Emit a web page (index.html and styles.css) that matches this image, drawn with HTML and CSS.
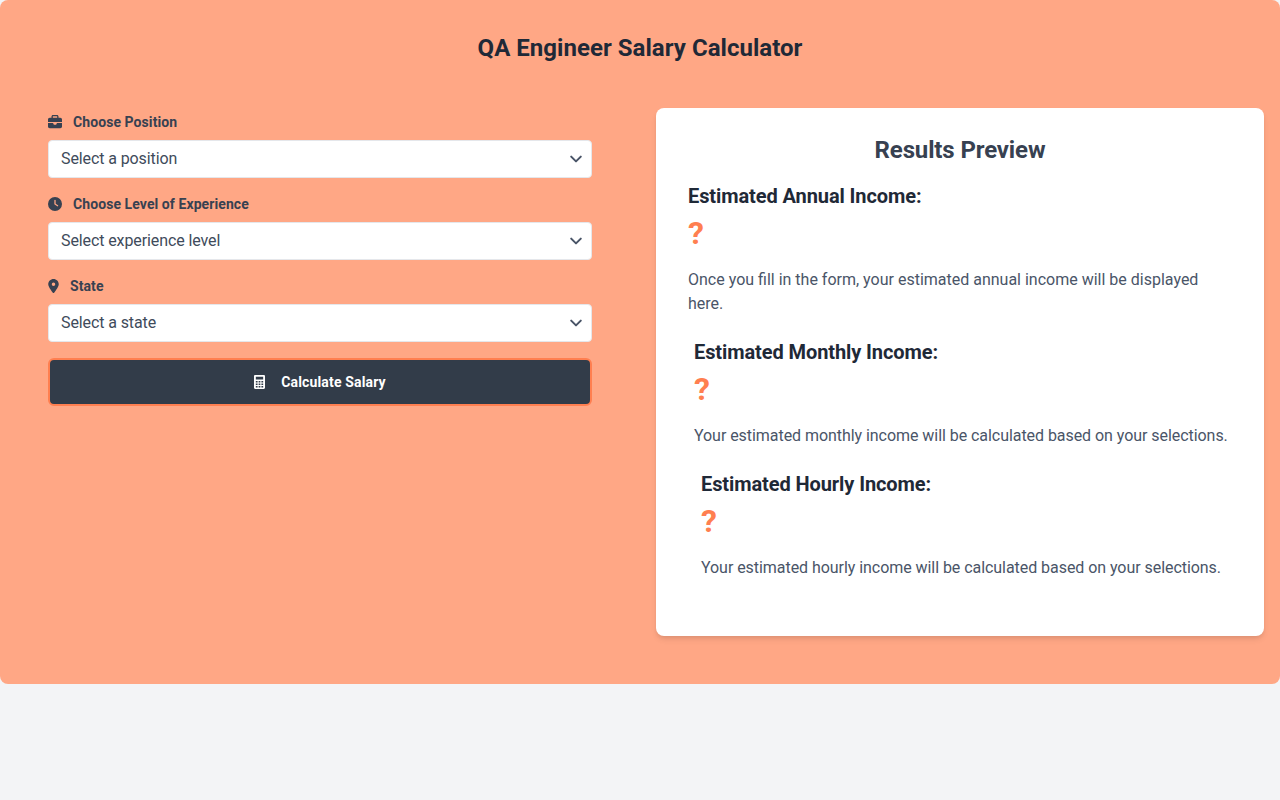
FILE: index.html
```html
<!DOCTYPE html>
<html lang="en">
<head>
    <meta charset="UTF-8">
    <meta name="viewport" content="width=device-width, initial-scale=1.0">
    <title>QA Engineer Salary Calculator</title>
    <link rel="stylesheet" href="styles.css">
</head>
<body>

<div class="calculator">
    <h1>QA Engineer Salary Calculator</h1>

    <div class="columns">
        <form class="salary-form">
            <!-- Position -->
            <div class="form-group">
                <label for="position">
                    <svg class="label-icon" width="14" height="14" viewBox="0 0 512 512" fill="currentColor"><path d="M184 48H328c4.400 0 8 3.600 8 8V96H176V56c0-4.400 3.600-8 8-8zm-56 8V96H64C28.700 96 0 124.700 0 160v96H192 320 512V160c0-35.300-28.700-64-64-64H384V56c0-30.900-25.100-56-56-56H184c-30.900 0-56 25.100-56 56zM512 288H320v32c0 17.700-14.300 32-32 32H224c-17.700 0-32-14.300-32-32V288H0V416c0 35.300 28.700 64 64 64H448c35.300 0 64-28.700 64-64V288z"/></svg>
                    Choose Position
                </label>
                <select id="position">
                    <option value="">Select a position</option>
                </select>
            </div>

            <!-- Experience -->
            <div class="form-group">
                <label for="experience">
                    <svg class="label-icon" width="14" height="14" viewBox="0 0 512 512" fill="currentColor"><path d="M256 0a256 256 0 1 1 0 512A256 256 0 1 1 256 0zM232 120V256c0 8 4 15.500 10.700 20l96 64c11 7.400 25.900 4.400 33.300-6.700s4.400-25.900-6.700-33.300L280 243.200V120c0-13.300-10.700-24-24-24s-24 10.700-24 24z"/></svg>
                    Choose Level of Experience
                </label>
                <select id="experience">
                    <option value="">Select experience level</option>
                </select>
            </div>

            <!-- State -->
            <div class="form-group">
                <label for="state">
                    <svg class="label-icon" width="11" height="14" viewBox="0 0 384 512" fill="currentColor"><path d="M215.700 499.200C267 435 384 279.400 384 192C384 86 298 0 192 0S0 86 0 192c0 87.400 117 243 168.300 307.200c12.300 15.300 35.100 15.300 47.400 0zM192 128a64 64 0 1 1 0 128 64 64 0 1 1 0-128z"/></svg>
                    State
                </label>
                <select id="state">
                    <option value="">Select a state</option>
                </select>
            </div>

            <button type="button" class="calculate-button">
                <svg class="button-icon" width="11" height="14" viewBox="0 0 12 14" preserveAspectRatio="none" fill="currentColor" fill-rule="evenodd"><path d="M1.200 0h9.600c.6 0 1.200.6 1.200 1.200v11.600c0 .6-.6 1.200-1.200 1.200H1.200c-.6 0-1.200-.6-1.200-1.200V1.200C0 .6.600 0 1.200 0zM2 1.800v2.700h8V1.800zM2 6v1.500h1.900V6zM5.050 6v1.500h1.900V6zM8.100 6v1.500H10V6zM2 8.500V10h1.900V8.500zM5.050 8.500V10h1.900V8.500zM8.100 8.500V10H10V8.500zM2 11v1.500h1.900V11zM5.050 11v1.500h1.900V11zM8.100 11v1.500H10V11z"/></svg>
                Calculate Salary
            </button>
        </form>

        <div class="results">
            <h2>Results Preview</h2>

            <div class="result-block">
                <h3>Estimated Annual Income:</h3>
                <div class="unknown">?</div>
                <p>Once you fill in the form, your estimated annual income will be displayed here.</p>
            </div>

            <div class="result-block monthly">
                <h3>Estimated Monthly Income:</h3>
                <div class="unknown">?</div>
                <p>Your estimated monthly income will be calculated based on your selections.</p>
            </div>

            <div class="result-block hourly">
                <h3>Estimated Hourly Income:</h3>
                <div class="unknown">?</div>
                <p>Your estimated hourly income will be calculated based on your selections.</p>
            </div>
        </div>
    </div>
</div>

</body>
</html>
```

FILE: styles.css
```css
* {
    box-sizing: border-box;
}
body {
    font-family: Roboto, Arial, sans-serif;
    margin: 0;
    min-height: 800px;
    background-color: #f3f4f6;
}
.calculator {
    height: 684px;
    padding: 32px 16px 48px;
    border-radius: 8px;
    background-color: #ffa785;
}
h1 {
    margin: 0 0 44px;
    font-size: 24px;
    line-height: 32px;
    font-weight: 700;
    letter-spacing: 0.035px;
    color: #1f2937;
    text-align: center;
}
.columns {
    display: grid;
    grid-template-columns: 1fr 1fr;
    gap: 32px;
}
.salary-form {
    padding: 4px 32px 0;
}
.form-group {
    margin-bottom: 16px;
}
label {
    display: flex;
    align-items: center;
    margin-bottom: 8px;
    font-size: 14px;
    line-height: 20px;
    font-weight: 700;
    letter-spacing: 0.08px;
    color: #374151;
}
.label-icon {
    margin-right: 11px;
}
select {
    display: block;
    width: 100%;
    height: 38px;
    padding: 0 40px 2px 12px;
    border: 1px solid #e5e7eb;
    border-radius: 4px;
    background-color: white;
    background-image: url("data:image/svg+xml,%3csvg xmlns='http://www.w3.org/2000/svg' viewBox='0 0 20 20' fill='none'%3e%3cpath d='M6 8l4 4 4-4' stroke='%234a5568' stroke-width='1.700' stroke-linecap='round' stroke-linejoin='round'/%3e%3c/svg%3e");
    background-repeat: no-repeat;
    background-position: right 3px center;
    background-size: 24px 24px;
    appearance: none;
    font-family: inherit;
    font-size: 16px;
    letter-spacing: -0.1px;
    color: #404b5b;
}
.calculate-button {
    display: flex;
    align-items: center;
    justify-content: center;
    width: 100%;
    height: 48px;
    border: 2px solid #ff7f50;
    border-radius: 6px;
    background-color: #323c49;
    font-family: inherit;
    font-size: 14px;
    font-weight: 700;
    letter-spacing: 0.15px;
    color: white;
}
.button-icon {
    margin-right: 16px;
}
.results {
    height: 528px;
    padding: 26px 32px 0;
    border-radius: 8px;
    background-color: white;
    box-shadow: 0 4px 6px -1px rgba(0, 0, 0, 0.1), 0 2px 4px -1px rgba(0, 0, 0, 0.06);
}
h2 {
    margin: 0 0 16px;
    font-size: 24px;
    line-height: 32px;
    font-weight: 700;
    letter-spacing: -0.13px;
    color: #374151;
    text-align: center;
}
h3 {
    margin: 0 0 7px;
    font-size: 20px;
    line-height: 28px;
    font-weight: 700;
    letter-spacing: -0.09px;
    color: #1f2937;
}
.unknown {
    margin-bottom: 19px;
    font-size: 32px;
    line-height: 32px;
    font-weight: 700;
    color: #ff7f50;
}
p {
    margin: 0;
    font-size: 16px;
    line-height: 24px;
    color: #4a5568;
}
.result-block {
    margin-bottom: 22px;
}
.monthly {
    margin-left: 6px;
}
.hourly {
    margin-left: 13px;
}
.monthly p, .hourly p {
    letter-spacing: -0.053px;
}
```
